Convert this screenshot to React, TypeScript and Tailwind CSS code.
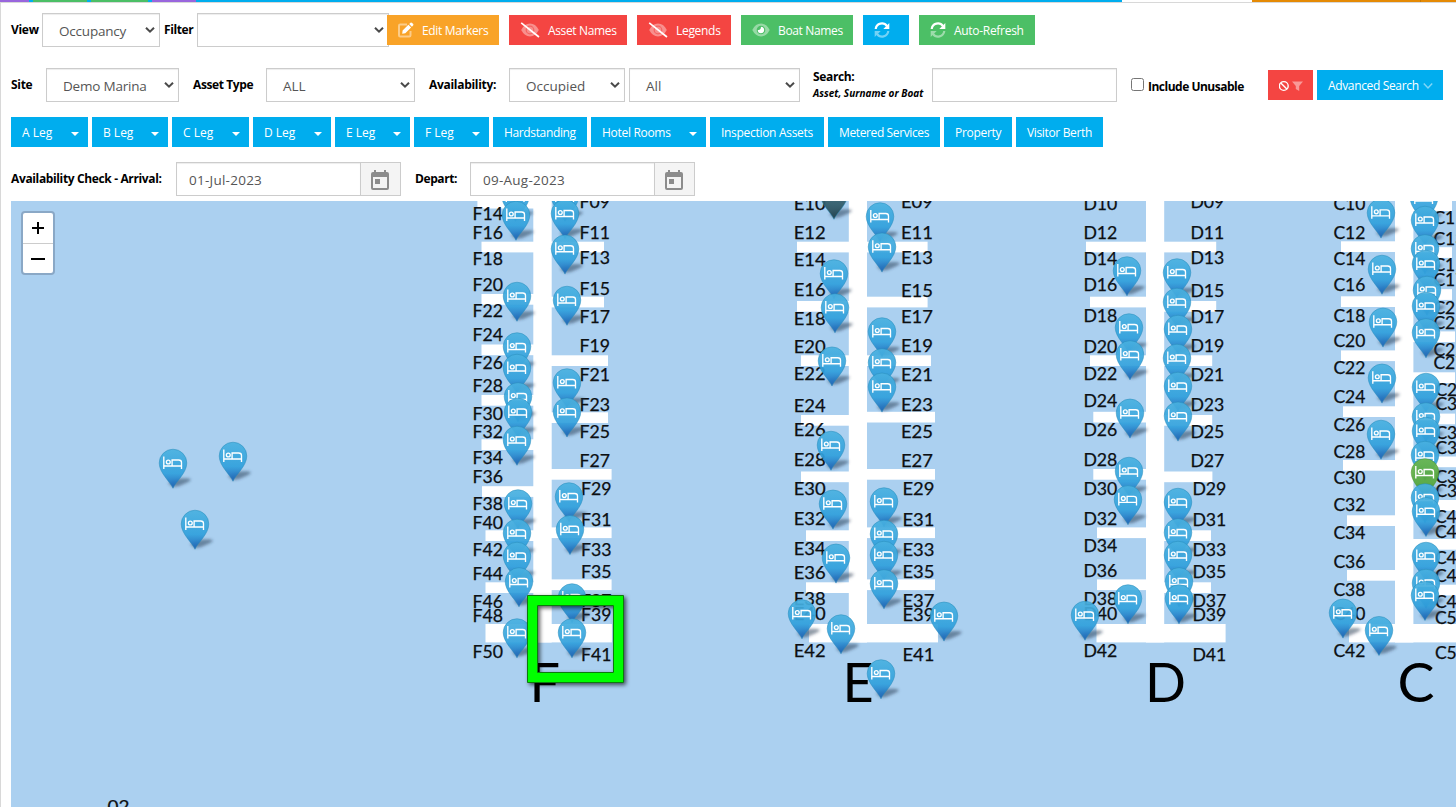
import React from "react";

type Bar = [number, number, number, number];
type Label = [string, number, number];

const strip: [string, string][] = [
  ["w-[29px]", "bg-[#9966dd]"], ["w-[4px]", "bg-[#00adee]"], ["w-[54px]", "bg-[#4cbf66]"], ["w-[4px]", "bg-[#00adee]"],
  ["w-[57px]", "bg-[#4cbf66]"], ["w-[4px]", "bg-[#00adee]"], ["w-[44px]", "bg-[#9966dd]"], ["w-[926px]", "bg-[#00adee]"],
  ["w-[130px]", "bg-white"], ["w-[168px]", "bg-[#e58a05]"], ["w-[1px]", "bg-[#c87800]"], ["w-[35px]", "bg-[#e58a05]"],
];

const Chevron = () => (
  <svg width="10" height="8" viewBox="0 0 10 8" className="flex-none">
    <path d="M1 1.7 L5 5.7 L9 1.7" fill="none" stroke="#4a4a4a" strokeWidth="2" />
  </svg>
);

const Select = ({ value, className, tracking = "" }: { value: string; className: string; tracking?: string }) => (
  <div className={`flex h-[34px] flex-none items-center justify-between border border-[#ccc] bg-white pl-4 pr-[4px] text-[13.5px] text-[#555] shadow-[inset_0_1px_1px_rgba(0,0,0,0.075)] ${className}`}>
    <span className={`whitespace-nowrap pt-[3px] ${tracking}`}>{value}</span>
    <Chevron />
  </div>
);

const Title = ({ children, className = "" }: { children: React.ReactNode; className?: string }) => (
  <span className={`flex-none whitespace-nowrap text-[12px] font-bold text-black ${className}`}>{children}</span>
);

const Btn = ({ children, className }: { children: React.ReactNode; className: string }) => (
  <button className={`flex h-[30px] flex-none items-center whitespace-nowrap pl-[11px] text-[12px] text-white ${className}`}>{children}</button>
);

const EditIcon = () => (
  <svg width="16" height="16" viewBox="0 0 16 16" className="flex-none">
    <path d="M9 2.5H2.2Q1 2.5 1 3.7V13.3Q1 14.5 2.2 14.5H11.3Q12.5 14.5 12.5 13.3V9" fill="none" stroke="#fff" strokeOpacity=".45" strokeWidth="2" />
    <path d="M4.6 8.6L10.4 2.8L13.1 5.5L7.3 11.3L4.2 11.7ZM11.2 2L12.5.8Q13.3.2 14.1.9L15.2 2Q15.8 2.8 15.1 3.5L13.9 4.7Z" fill="#fff" />
  </svg>
);
const EyeSlash = () => (
  <svg width="20" height="16" viewBox="0 0 20 16" className="flex-none">
    <path d="M1.2 8Q4.5 1.6 10 1.6T18.8 8Q15.5 14.4 10 14.4T1.2 8Z" fill="#fff" fillOpacity=".4" />
    <circle cx="10" cy="8" r="3.8" fill="none" stroke="#f44542" strokeWidth="1.2" strokeOpacity=".6" />
    <path d="M1.2 .8L19 15" stroke="#fff" strokeWidth="1.7" />
  </svg>
);
const Eye = () => (
  <svg width="18" height="16" viewBox="0 0 18 16" className="flex-none">
    <path d="M.3 8Q3.5 1.6 9 1.6T17.7 8Q14.5 14.4 9 14.4T.3 8Z" fill="#fff" fillOpacity=".42" />
    <circle cx="9" cy="8" r="4.3" fill="#4cbf66" />
    <path d="M9 4.8A3.2 3.2 0 1 1 5.8 8Q8.8 8.5 9 4.8Z" fill="#fff" />
  </svg>
);
const Sync = () => (
  <svg width="16" height="16" viewBox="0 0 16 16" className="flex-none">
    <path d="M1.7 7A6.2 6.2 0 0 1 13 4.2" fill="none" stroke="#fff" strokeWidth="2.2" />
    <path d="M15.3 1V7H9.3Z" fill="#fff" />
    <g opacity=".45">
      <path d="M14.3 9A6.2 6.2 0 0 1 3 11.8" fill="none" stroke="#fff" strokeWidth="2.2" />
      <path d="M.7 15V9H6.7Z" fill="#fff" />
    </g>
  </svg>
);
const Calendar = () => (
  <div className="flex h-[34px] w-[41px] flex-none items-center justify-center border border-[#ccc] bg-[#f4f4f4] pr-px pt-[2px]">
    <svg width="18" height="20" viewBox="0 0 18 20">
      <path d="M3 0H5V2H13V0H15V2H16Q18 2 18 4V18Q18 20 16 20H2Q0 20 0 18V4Q0 2 2 2H3ZM2 7V18H16V7Z" fill="#8c8c8c" fillRule="evenodd" />
      <rect x="4" y="9" width="5" height="5" fill="#8c8c8c" />
    </svg>
  </div>
);
const DateField = ({ value }: { value: string }) => (
  <div className="flex h-[34px] w-[184px] flex-none items-center border border-r-0 border-[#ccc] pl-3 pt-[3px] text-[13.5px] tracking-[0.25px] text-[#555] shadow-[inset_0_1px_1px_rgba(0,0,0,0.075)]">{value}</div>
);

const legs: [string, string, boolean, string][] = [
  ["A Leg", "w-[77px]", true, ""], ["B Leg", "w-[76px]", true, ""], ["C Leg", "w-[77px]", true, ""],
  ["D Leg", "w-[78px]", true, ""], ["E Leg", "w-[75px]", true, ""], ["F Leg", "w-[75px]", true, ""],
  ["Hardstanding", "w-[94px]", false, "tracking-[-0.36px]"], ["Hotel Rooms", "w-[115px]", true, "tracking-[-0.3px]"], ["Inspection Assets", "w-[114px]", false, "tracking-[-0.3px]"],
  ["Metered Services", "w-[112px]", false, "tracking-[-0.38px]"], ["Property", "w-[68px]", false, "tracking-[-0.3px]"], ["Visitor Berth", "w-[87px]", false, "tracking-[-0.35px]"],
];

const piers: Bar[] = [
  [533.3, 201, 551.7, 642.5], [848.8, 201, 867, 642.5], [1146, 201, 1164.2, 642.5], [1395, 201, 1413.4, 642.5],
  [485.5, 624, 612, 642.4], [809, 624, 938, 642.4], [1096.5, 624, 1225.6, 642.4], [1349, 624, 1456, 642.4],
  [477.4, 201, 534, 208.5], [1413, 201, 1452, 211],
];
const fingers: [number, number, number][] = [
  [481.5, 534, 241.7], [481.5, 534, 294], [481.5, 534, 344.5], [481.5, 534, 395], [481.5, 534, 439.3], [482, 534, 486.2], [485.5, 534, 530.3], [485.5, 534, 582.3],
  [551, 604, 241.7], [551, 604, 296.7], [551, 608, 355.3], [551, 608, 412.3], [551, 611.6, 469], [551, 611.6, 527.4], [551, 611.6, 579.4],
  [797, 849, 241.7], [797, 849, 301], [801, 849, 355.3], [801, 849, 415], [801, 849, 471.5], [806, 849, 530.3], [806, 849, 582.3],
  [866, 927.6, 241.7], [866, 927.6, 296.7], [866, 931, 355.3], [866, 935, 411.8], [866, 935, 469], [866, 935, 527.4], [866, 935, 579.4],
  [1086, 1147, 241.7], [1090, 1147, 296.7], [1090, 1147, 355.3], [1093.3, 1147, 411.8], [1093.3, 1147, 469], [1097, 1147, 527.4], [1097, 1147, 579.4],
  [1164, 1216.2, 241.7], [1164, 1216.2, 301], [1164, 1212.2, 355.3], [1164, 1212.2, 415], [1164, 1212.4, 471.5], [1164, 1211, 530.3], [1164, 1211, 582.3],
  [1341, 1396, 241.3], [1341, 1396, 296.3], [1341, 1396, 350.4], [1343, 1396, 406.3], [1343, 1396, 460], [1347, 1396, 515.3], [1347, 1396, 570],
  [1413, 1452, 247.2], [1413, 1452, 289.2], [1413, 1455, 331.4], [1413, 1455, 372.3], [1413, 1455, 413.6], [1413, 1456, 456.5], [1413, 1456, 500], [1413, 1456, 539], [1413, 1456, 584.7],
];

const column = (letter: string, x: number, first: number, ys: number[]): Label[] =>
  ys.map((y, i) => [letter + String(first + i * 2).padStart(2, "0"), x, y]);

const labels: Label[] = [
  ...column("F", 473, 14, [214, 232.5, 258.5, 284.7, 311, 335, 363, 385.3, 413.7, 432, 458, 477, 504, 522.3, 549.3, 573.7, 602, 615.3, 651.3]),
  ...column("F", 580, 9, [202, 232.5, 257.7, 289, 317, 345.5, 374.5, 404.7, 431.5, 461]),
  ...column("F", 581.7, 29, [488.5, 519.7, 549.5, 572, 601, 614.5, 654.7]),
  ...column("E", 794.3, 10, [204, 232.5, 259.3, 290, 319, 346.7, 373.7, 405.7, 430, 459.7, 488.5, 519, 548.7, 572.7, 599, 614, 650.7]),
  ...column("E", 901.5, 9, [202, 232.5, 257.7, 291, 317, 345.5, 374.5, 405, 432, 461]),
  ...column("E", 903, 29, [488.5, 519.7, 549.5, 572, 601, 614.5, 654.7]),
  ...column("D", 1084, 10, [204, 232.5, 259, 285, 316, 346.7, 374, 400.5, 430, 459.7, 488.5, 519, 546, 570.3, 599, 614, 650.7]),
  ...column("D", 1191, 9, [202, 232.5, 257.7, 291, 317, 345.5, 374.5, 405, 432, 461]),
  ...column("D", 1193, 29, [488.5, 519.7, 549.5, 572, 601, 614.5, 654.7]),
  ...column("C", 1334, 10, [204, 232.5, 259, 285, 316, 340.5, 367.5, 397, 425, 452, 478, 505, 533, 561.5, 589.5, 614, 650.7]),
  ...column("C", 1434, 11, [218, 239, 265, 280]),
  ...column("C", 1434, 21, [308, 322.5, 349.5, 362.5]),
  ["C29", 1436, 390], ["C31", 1436, 404], ["C33", 1436, 433], ["C35", 1436, 448], ["C37", 1436, 476.5], ["C39", 1436, 491],
  ["C41", 1435.5, 517], ["C43", 1435.5, 532], ["C45", 1435.5, 557.5], ["C47", 1435.5, 575.5], ["C49", 1435.5, 602], ["C51", 1435.5, 618], ["C53", 1435.5, 653],
];

const markers: [number, number, string?][] = [
  [173, 488], [233, 481], [195, 549],
  [515.5, 221], [516, 240], [517, 321], [517, 371.5], [517, 393], [518, 421.5], [518, 437], [517, 465], [518, 528.5], [517, 558], [517, 581], [519, 606.5], [517, 657.5],
  [565, 221], [565, 238.5], [565, 273.8], [567, 325], [567, 407.5], [567, 436.7], [569, 521.5], [570, 554.3], [572, 622.5], [572, 657.5],
  [834, 219, "dark"], [834, 298.5], [835, 332.5], [832, 385.7], [831, 470], [833, 528.8], [836, 582.8], [802, 638.5], [841, 653.5], [881, 698.5], [944, 640.8],
  [880, 241.5], [882, 271.8], [882, 356.5], [882, 387.5], [882, 411.8], [884, 526.5], [884, 559], [884, 580], [884, 608.5],
  [1127, 295.5], [1129, 352.5], [1130, 379.5], [1130, 437.8], [1129, 496], [1128, 524.4], [1128, 623.5], [1085, 640],
  [1177, 297.5], [1177, 327], [1178, 354], [1177, 383], [1178, 411], [1178, 440.8], [1178, 527], [1178, 557.5], [1178, 580], [1179, 606.5], [1179, 623.5],
  [1381, 237.8], [1382, 294], [1383, 346.8], [1382, 402.8], [1381, 459], [1343, 637.8], [1379, 655.2],
  [1424, 223], [1425, 245], [1425, 273.5], [1426, 289], [1427, 315], [1426, 331], [1426, 357.5], [1426, 412], [1426, 441.5], [1426, 456], [1425, 480],
  [1425, 497.5, "green"], [1425, 522.5], [1426, 536.2], [1426, 581], [1426, 608], [1425, 620.2],
];

const Marker = ({ x, y, tone = "blue" }: { x: number; y: number; tone?: string }) => (
  <g transform={`translate(${x} ${y})`}>
    <path d="M0 -1 L-5 -5 Q3 -11 16 -9.5 Q21 -8.5 12 -4.5 Q6 -1 0 -1Z" fill="#23384f" fillOpacity=".5" filter="url(#soft)" />
    <path d="M0 .3 C-2.5 -6 -13.8 -15 -13.8 -25 A13.8 13.8 0 0 1 13.8 -25 C13.8 -15 2.5 -6 0 .3Z" fill={`url(#pin-${tone})`} fillOpacity=".92" stroke={tone === "green" ? "#4a8f2c" : "#2389b8"} strokeOpacity=".6" strokeWidth=".8" />
    <g fill="none" stroke="#fff" strokeWidth="1.35">
      <path d="M-9.2 -31.6V-19M-9.2 -22H8.6M-.9 -22V-28H5.7Q8.5 -28 8.5 -25.4V-19" />
      <circle cx="-4.7" cy="-26" r="1.9" />
    </g>
  </g>
);

const stops: Record<string, [string, string, string]> = {
  blue: ["#49b1e0", "#30a0dc", "#1d5fb4"],
  green: ["#6cb84c", "#55a83c", "#2d7a22"],
  dark: ["#45717f", "#315b68", "#203f4a"],
};

const MarinaMap = () => (
  <svg width="1445" height="606" viewBox="11 201 1445 606" className="block" fontFamily="Lato, 'Noto Sans', sans-serif">
    <defs>
      <filter id="soft" x="-30%" y="-60%" width="160%" height="220%"><feGaussianBlur stdDeviation="1.5" /></filter>
      <filter id="frame" x="-10%" y="-10%" width="125%" height="125%"><feDropShadow dx="2" dy="2" stdDeviation="2" floodColor="#000" floodOpacity=".65" /></filter>
      {Object.entries(stops).map(([name, [a, b, c]]) => (
        <linearGradient key={name} id={`pin-${name}`} x1="0" y1="0" x2="0" y2="1">
          <stop offset="0" stopColor={a} /><stop offset=".62" stopColor={b} /><stop offset="1" stopColor={c} />
        </linearGradient>
      ))}
    </defs>
    <rect x="11" y="201" width="1445" height="606" fill="#abd0f0" />
    <g fill="#fff">
      {piers.map(([a, b, c, d], i) => <rect key={i} x={a} y={b} width={c - a} height={d - b} />)}
      {fingers.map(([a, b, y], i) => <rect key={i} x={a} y={y} width={b - a} height="10.7" />)}
    </g>
    <g fill="#0c0f12" fontSize="17.6" stroke="#0c0f12" strokeWidth=".25">
      {labels.map(([t, x, y], i) => (
        <text key={i} x={x - 0.6} y={y + 6.3} textLength={t[0] === "F" ? 30.5 : t[0] === "D" ? 34 : 32} lengthAdjust="spacingAndGlyphs">{t}</text>
      ))}
      <text x="107.5" y="813" textLength="22" lengthAdjust="spacingAndGlyphs">02</text>
    </g>
    <g fill="#000" fontSize="54">
      <text x="529.5" y="702">F</text><text x="842.5" y="702">E</text><text x="1145" y="702" textLength="41" lengthAdjust="spacingAndGlyphs">D</text><text x="1397.5" y="702" textLength="37" lengthAdjust="spacingAndGlyphs">C</text>
    </g>
    {markers.map(([x, y, tone], i) => <Marker key={i} x={x} y={y} tone={tone} />)}
    <g filter="url(#frame)">
      <path d="M527.5 595.5H623.5V682.5H527.5ZM537.5 605.5V672.5H613.5V605.5Z" fill="#00ff00" fillRule="evenodd" stroke="#0c7a0c" />
    </g>
  </svg>
);

export default function App() {
  return (
    <div className="h-[807px] w-[1456px] overflow-hidden bg-white font-['Open_Sans','Noto_Sans',sans-serif]">
      <div className="flex h-[2px]">{strip.map(([w, c], i) => <div key={i} className={`h-full flex-none ${w} ${c}`} />)}</div>
      <div className="h-[805px] border-l border-t border-[#d8d8d8] pl-[10px]">
        <div className="flex h-[54px] items-center">
          <Title className="w-[31px] tracking-[-0.3px]">View</Title>
          <Select value="Occupancy" className="w-[118px]" tracking="tracking-[-0.2px]" />
          <Title className="ml-1 w-[33px] tracking-[-0.4px]">Filter</Title>
          <Select value="" className="w-[192px]" />
          <div className="-ml-[2px] flex gap-[10px]">
            <Btn className="w-28 bg-[#f9a328]"><EditIcon /><span className="ml-2 pt-[2px] tracking-[-0.35px]">Edit Markers</span></Btn>
            <Btn className="w-[118px] bg-[#f44542]"><EyeSlash /><span className="ml-2 pt-[2px] tracking-[-0.35px]">Asset Names</span></Btn>
            <Btn className="w-[94px] bg-[#f44542]"><EyeSlash /><span className="ml-2 pt-[2px] tracking-[-0.3px]">Legends</span></Btn>
            <Btn className="w-28 bg-[#4cbf66]"><Eye /><span className="ml-2 pt-[2px] tracking-[-0.35px]">Boat Names</span></Btn>
            <Btn className="w-[46px] bg-[#00adee]"><Sync /></Btn>
            <Btn className="w-[116px] bg-[#4cbf66]"><Sync /><span className="ml-2 pt-[2px] tracking-[-0.3px]">Auto-Refresh</span></Btn>
          </div>
        </div>
        <div className="flex h-14 items-center">
          <Title className="w-[35px] tracking-[-0.3px]">Site</Title>
          <Select value="Demo Marina" className="w-[133px]" tracking="tracking-[-0.2px]" />
          <Title className="ml-[14px] w-[73px] tracking-[-0.4px]">Asset Type</Title>
          <Select value="ALL" className="w-[149px]" />
          <Title className="ml-[14px] w-[80px] tracking-[-0.3px]">Availability:</Title>
          <Select value="Occupied" className="w-[116px]" />
          <Select value="All" className="ml-1 w-[171px]" />
          <div className="ml-[13px] flex w-[119px] flex-none flex-col text-black">
            <Title className="leading-[16px] tracking-[-0.35px]">Search:</Title>
            <span className="whitespace-nowrap text-[10px] font-bold italic leading-[16px]">Asset, Surname or Boat</span>
          </div>
          <div className="h-[34px] w-[185px] flex-none border border-[#ccc] shadow-[inset_0_1px_1px_rgba(0,0,0,0.075)]" />
          <div className="-mt-px ml-[14px] size-[13px] flex-none rounded-[2.5px] border border-[#767676] bg-white" />
          <Title className="ml-1 w-[120px] pt-1 tracking-[-0.5px]">Include Unusable</Title>
          <Btn className="w-[45px] bg-[#f44542] pt-[2px]">
            <svg width="24" height="12" viewBox="0 0 24 12">
              <circle cx="4.8" cy="6" r="4.4" fill="none" stroke="#fff" strokeWidth="1.4" />
              <path d="M1.8 3L7.8 9" stroke="#fff" strokeWidth="1.4" />
              <path d="M13 1.5H24L20.2 6V11L16.8 9V6Z" fill="#fff" fillOpacity=".45" />
            </svg>
          </Btn>
          <Btn className="ml-1 w-[126px] bg-[#00adee] pt-[2px]">
            <span className="tracking-[-0.35px]">Advanced Search</span>
            <svg width="10" height="8" viewBox="0 0 10 8" className="ml-1"><path d="M.8 1.5L5 5.9L9.2 1.5" fill="none" stroke="#fff" strokeOpacity=".5" strokeWidth="1.5" /></svg>
          </Btn>
        </div>
        <div className="mt-1 flex h-[30px] gap-1">
          {legs.map(([name, width, menu, tr]) => (
            <Btn key={name} className={`${width} justify-between bg-[#00adee] pr-[9px] pt-[2px]`}>
              <span className={tr}>{name}</span>
              {menu && <svg width="8" height="4" viewBox="0 0 8 4" className="mt-0.5 flex-none"><path d="M0 0H8L4 4Z" fill="#fff" /></svg>}
            </Btn>
          ))}
        </div>
        <div className="mt-[15px] flex h-[34px] items-center">
          <Title className="w-[165px] tracking-[-0.36px]">Availability Check - Arrival:</Title>
          <DateField value="01-Jul-2023" />
          <Calendar />
          <Title className="ml-[14px] w-[55px] tracking-[-0.4px]">Depart:</Title>
          <DateField value="09-Aug-2023" />
          <Calendar />
        </div>
        <div className="relative mt-[5px] h-[606px] w-[1445px] overflow-hidden">
          <MarinaMap />
          <div className="absolute left-[10px] top-[10px] w-[34px] rounded-[4px] border-2 border-[#8aa8c6] bg-white">
            <button className="flex h-[31px] w-full items-center justify-center border-b border-[#ccc]">
              <svg width="12" height="12"><path d="M6 0V12M0 6H12" stroke="#000" strokeWidth="2" /></svg>
            </button>
            <button className="flex h-[29px] w-full items-center justify-center pt-px">
              <svg width="14" height="4"><path d="M0 2H14" stroke="#000" strokeWidth="2" /></svg>
            </button>
          </div>
        </div>
      </div>
    </div>
  );
}
